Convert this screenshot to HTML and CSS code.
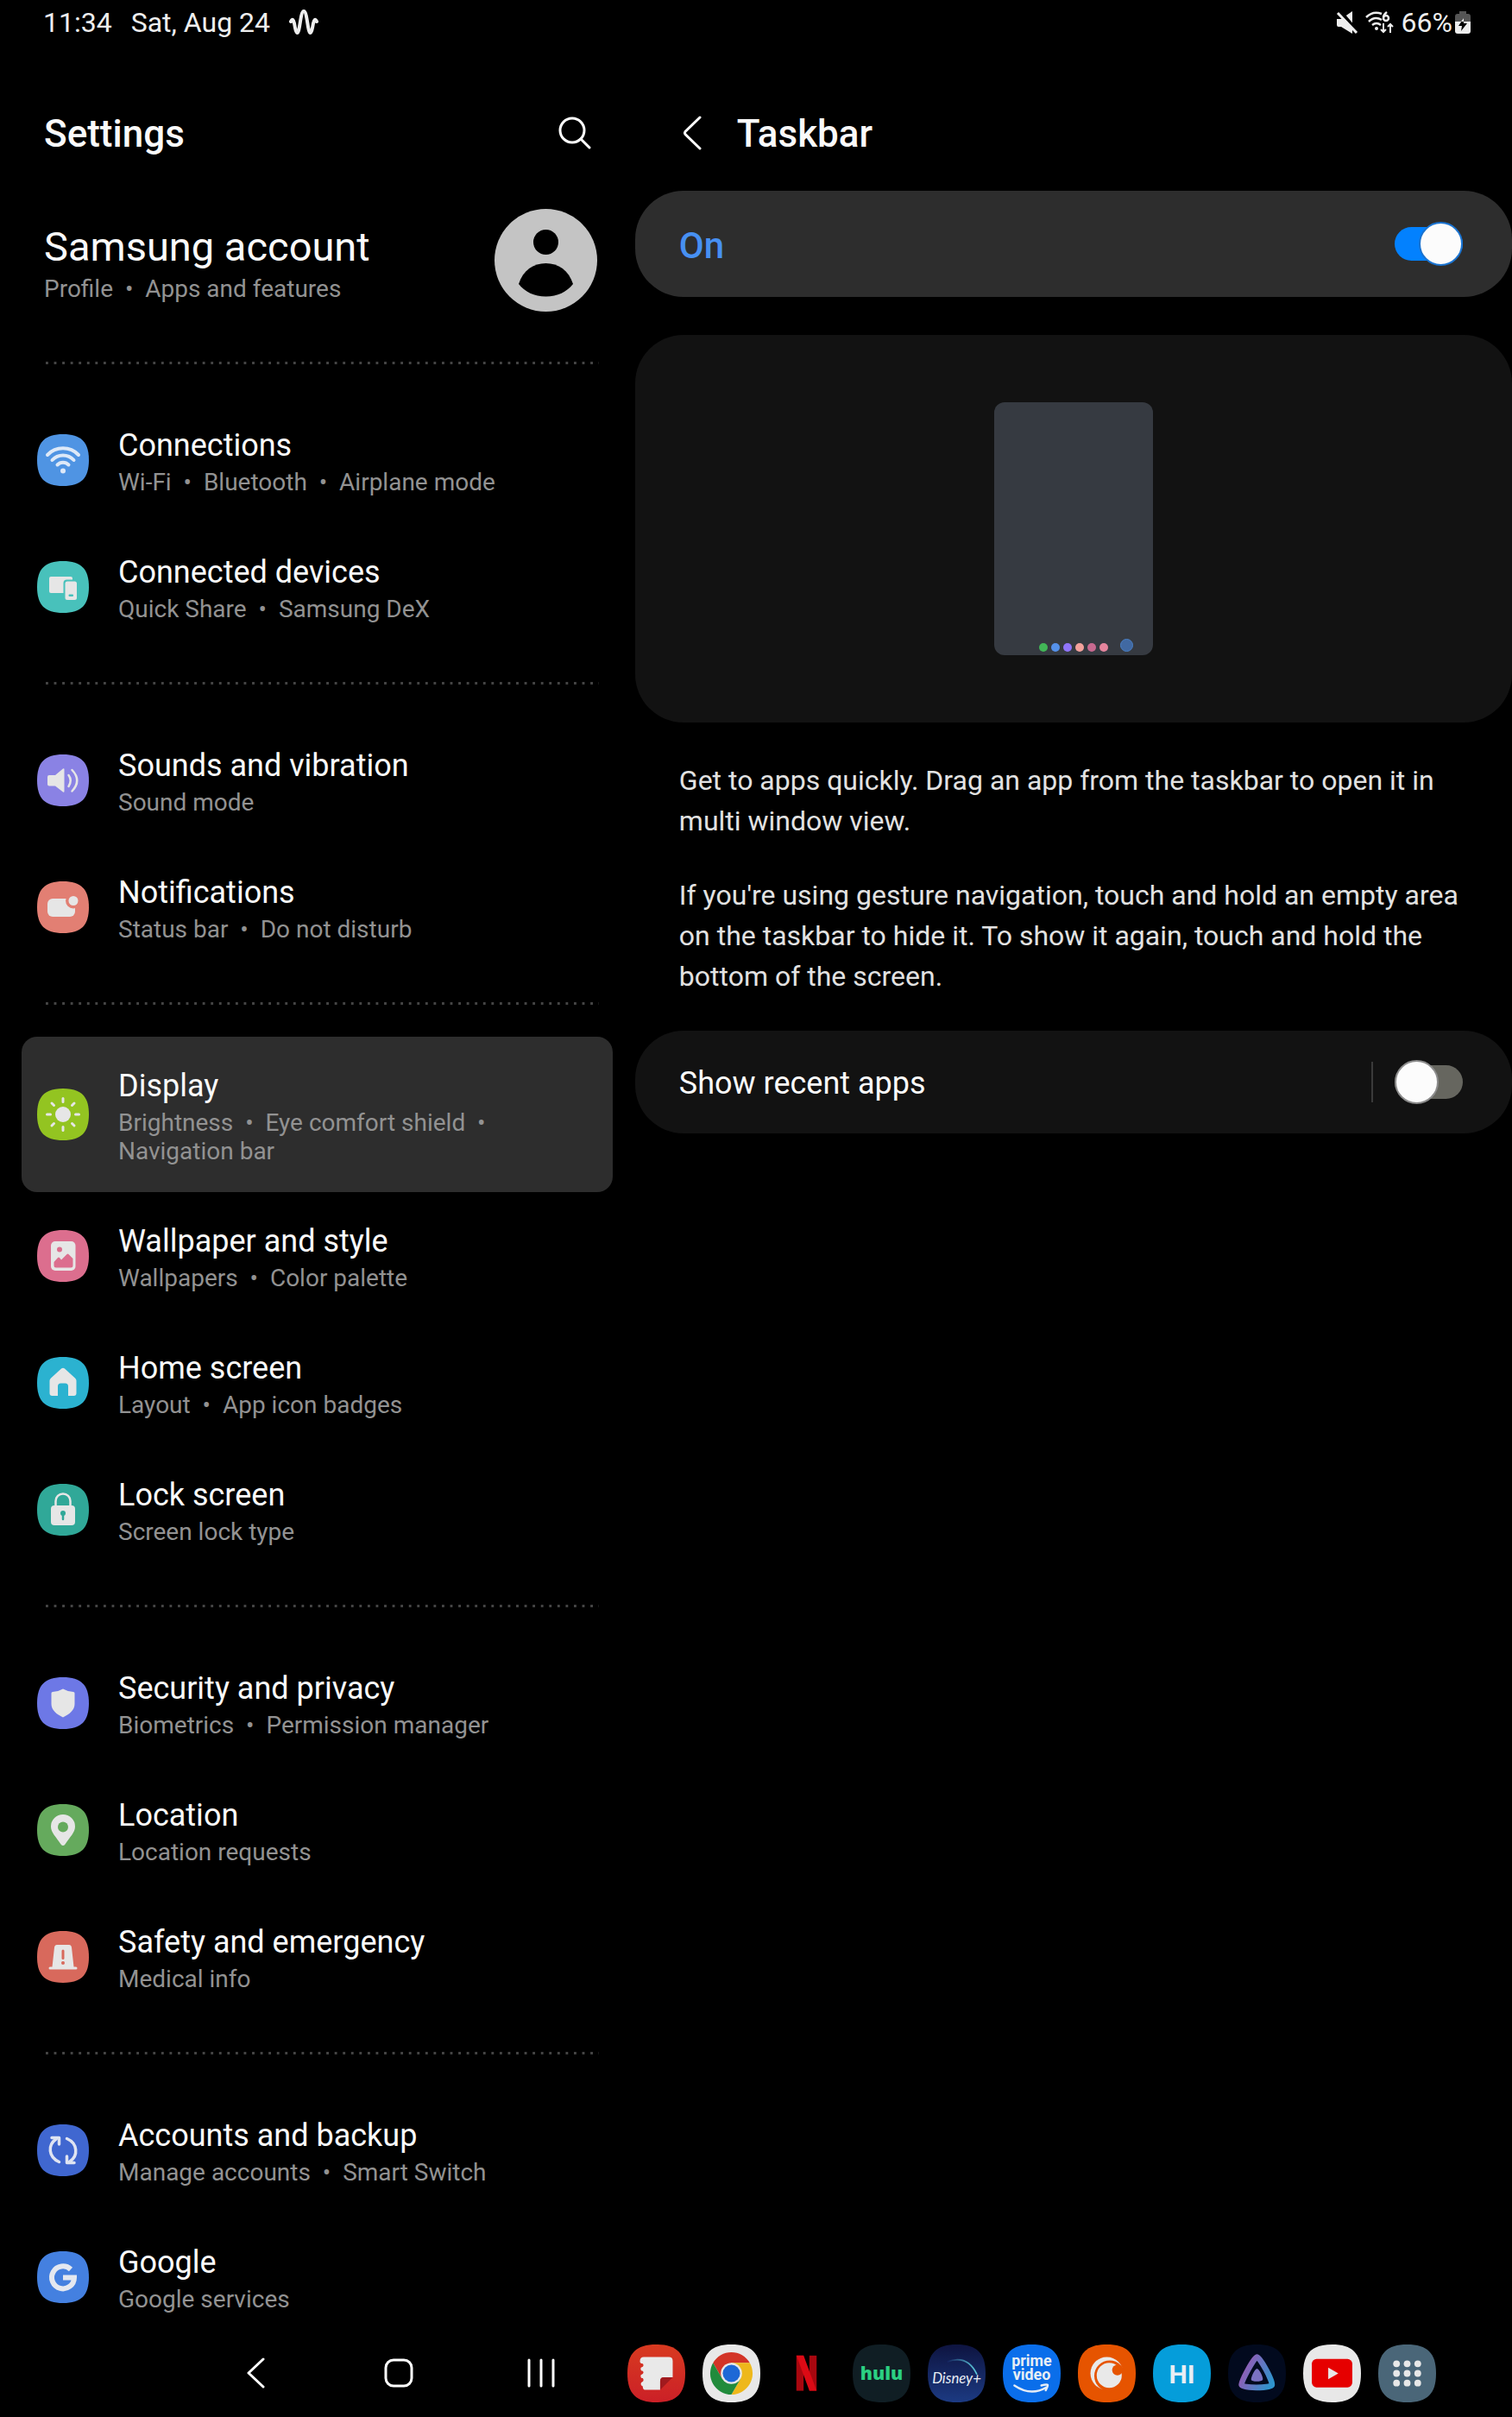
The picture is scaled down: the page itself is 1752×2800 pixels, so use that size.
FILE: index.html
```html
<!DOCTYPE html>
<html lang="en">
<head>
<meta charset="UTF-8">
<meta name="viewport" content="width=device-width, initial-scale=1.0">
<title>Settings</title>
<link rel="stylesheet" href="styles.css">
</head>
<body>

<!-- Shared icon background -->
<svg class="defs" aria-hidden="true">
  <symbol id="tile" viewBox="0 0 60 60">
    <path d="M30 0C51 0 60 9 60 30S51 60 30 60 0 51 0 30 9 0 30 0Z"/>
  </symbol>
</svg>

<header class="status-bar">
  <div class="status-group status-left">
    <span>11:34</span>
    <span>Sat, Aug 24</span>
    <svg width="34" height="30" viewBox="0 0 34 30" aria-hidden="true">
      <path d="M2 14C4 10 5 12 6 16 7 22 8 27 9.5 27 12.500 27 13 2 17 2S21.500 27 24.500 27C26 27 27 22 28 16 29 12 30 10 32 14" fill="none" stroke="#eee" stroke-width="4" stroke-linecap="round"/>
    </svg>
  </div>
  <div class="status-group status-right">
    <svg width="26" height="26" viewBox="0 0 26 26" aria-hidden="true">
      <path d="M1 9h5L19 0v26L6 18H3a2 2 0 0 1-2-2z" fill="#eee"/>
      <path d="M5 0L27 26" stroke="#000" stroke-width="4"/>
      <path d="M2 2L24 25" stroke="#eee" stroke-width="3"/>
    </svg>
    <svg width="34" height="26" viewBox="0 0 34 26" aria-hidden="true">
      <g fill="none" stroke="#eee" stroke-width="2.5">
        <path d="M1 7Q9-1 19 3"/>
        <path d="M4 12Q11 5 19 10"/>
        <path d="M8 16Q13 12 18 16"/>
        <path d="M25 1Q21 4 21 7"/>
        <circle cx="24" cy="8" r="3"/>
        <path d="M21 14v10M18 21l3 3 3-3M29 25V15M26 18l3-3 3 3" stroke-width="2"/>
      </g>
      <circle cx="13" cy="20" r="2" fill="#eee"/>
    </svg>
    <span>66%</span>
    <svg class="battery" width="18" height="26" viewBox="0 0 18 26" aria-hidden="true">
      <path d="M5 0h8v3h2a3 3 0 0 1 3 3v7H0V6a3 3 0 0 1 3-3h2z" fill="#555"/>
      <path d="M0 12h18v11a3 3 0 0 1-3 3H3a3 3 0 0 1-3-3z" fill="#eee"/>
      <path d="M10 8L4 17h4l-1 6 7-9h-4z" fill="#000"/>
      <path d="M10 8L7 12h3z" fill="#eee"/>
    </svg>
  </div>
</header>

<main class="panes">

  <nav class="sidebar">
    <div class="pane-header">
      <h1>Settings</h1>
      <button class="icon-button" aria-label="Search">
        <svg width="38" height="40" viewBox="0 0 38 40" aria-hidden="true">
          <g fill="none" stroke="#fff" stroke-width="3" stroke-linecap="round">
            <circle cx="16" cy="16" r="14"/>
            <path d="M26 26l10 10"/>
          </g>
        </svg>
      </button>
    </div>

    <a class="account" href="#account">
      <span class="account-text">
        <span class="account-name">Samsung account</span>
        <span class="sub">Profile &nbsp;•&nbsp; Apps and features</span>
      </span>
      <svg width="119" height="119" viewBox="0 0 119 119" aria-hidden="true">
        <circle cx="59.5" cy="59.5" r="59.5" fill="#c4c4c4"/>
        <circle cx="59.5" cy="38.5" r="14.5" fill="#000"/>
        <path d="M28 87C33 71 45 63 59.5 63S86 71 91 87C84 96 73 101.5 59.5 101.5S35 96 28 87Z" fill="#000"/>
      </svg>
    </a>

    <hr class="dots">

    <ul class="menu">
      <li><a class="item" href="#connections">
        <svg class="item-icon" viewBox="0 0 60 60" aria-hidden="true">
          <use href="#tile" fill="#4f94e3"/>
          <g fill="none" stroke="#dde9f8" stroke-width="4" stroke-linecap="round">
            <path d="M12 24A25 25 0 0 1 48 24"/>
            <path d="M17.5 30A17 17 0 0 1 42.5 30"/>
            <path d="M23.5 35.5A9 9 0 0 1 36.5 35.5"/>
          </g>
          <circle cx="30" cy="42.5" r="3" fill="#dde9f8"/>
        </svg>
        <span class="item-text">
          <span class="title">Connections</span>
          <span class="sub">Wi-Fi &nbsp;•&nbsp; Bluetooth &nbsp;•&nbsp; Airplane mode</span>
        </span>
      </a></li>
      <li><a class="item" href="#devices">
        <svg class="item-icon" viewBox="0 0 60 60" aria-hidden="true">
          <use href="#tile" fill="#48c1bb"/>
          <rect x="14" y="18" width="27" height="19" rx="2" fill="#e6e6e6"/>
          <rect x="30.5" y="21.5" width="17" height="26" rx="4" fill="#48c1bb"/>
          <rect x="32.5" y="23.5" width="13.5" height="21.5" rx="2.5" fill="#e6e6e6"/>
          <rect x="36.5" y="38.5" width="5.5" height="2.5" rx="1" fill="#48c1bb"/>
        </svg>
        <span class="item-text">
          <span class="title">Connected devices</span>
          <span class="sub">Quick Share &nbsp;•&nbsp; Samsung DeX</span>
        </span>
      </a></li>
    </ul>

    <hr class="dots">

    <ul class="menu">
      <li><a class="item" href="#sounds">
        <svg class="item-icon" viewBox="0 0 60 60" aria-hidden="true">
          <use href="#tile" fill="#8a82e4"/>
          <path d="M14 24h7l9-7.5q1.5-1 1.5 1v25q0 2-1.5 1L21 36.5h-7q-2 0-2-2v-8.5q0-2 2-2z" fill="#e6e6e6"/>
          <g fill="none" stroke="#e6e6e6" stroke-width="2.5" stroke-linecap="round">
            <path d="M36.5 24Q41 30 36.5 37"/>
            <path d="M40.5 18Q52 30 40.5 42.5"/>
          </g>
        </svg>
        <span class="item-text">
          <span class="title">Sounds and vibration</span>
          <span class="sub">Sound mode</span>
        </span>
      </a></li>
      <li><a class="item" href="#notifications">
        <svg class="item-icon" viewBox="0 0 60 60" aria-hidden="true">
          <use href="#tile" fill="#e27f73"/>
          <rect x="12" y="20" width="32" height="21" rx="6" fill="#e6e6e6"/>
          <circle cx="42" cy="22.5" r="9" fill="#e27f73"/>
          <circle cx="42" cy="22.5" r="5.5" fill="#e6e6e6"/>
        </svg>
        <span class="item-text">
          <span class="title">Notifications</span>
          <span class="sub">Status bar &nbsp;•&nbsp; Do not disturb</span>
        </span>
      </a></li>
    </ul>

    <hr class="dots">

    <ul class="menu">
      <li><a class="item selected" href="#display">
        <svg class="item-icon" viewBox="0 0 60 60" aria-hidden="true">
          <use href="#tile" fill="#93c421"/>
          <circle cx="30" cy="30" r="9" fill="#e6e6e6"/>
          <path d="M30 11.5v4M30 44.5v4M11.5 30h4M44.5 30h4M17 17l2.5 2.5M40.5 40.5l2.5 2.5M17 43l2.5-2.5M40.5 19.5l2.5-2.5" stroke="#e6e6e6" stroke-width="3" stroke-linecap="round"/>
        </svg>
        <span class="item-text">
          <span class="title">Display</span>
          <span class="sub">Brightness &nbsp;•&nbsp; Eye comfort shield &nbsp;•&nbsp; Navigation bar</span>
        </span>
      </a></li>
      <li><a class="item" href="#wallpaper">
        <svg class="item-icon" viewBox="0 0 60 60" aria-hidden="true">
          <use href="#tile" fill="#dc6e8e"/>
          <rect x="16" y="13" width="28.5" height="34" rx="5" fill="#e6e6e6"/>
          <circle cx="26" cy="22.5" r="3" fill="#dc6e8e"/>
          <path d="M19.5 37L24 32q1-1 2 0l2 2.5 6.5-6.5q1-1 2 0L41.500 33v8q0 2.5-2.5 2.5H22q-2.5 0-2.5-2.5z" fill="#dc6e8e"/>
        </svg>
        <span class="item-text">
          <span class="title">Wallpaper and style</span>
          <span class="sub">Wallpapers &nbsp;•&nbsp; Color palette</span>
        </span>
      </a></li>
      <li><a class="item" href="#home">
        <svg class="item-icon" viewBox="0 0 60 60" aria-hidden="true">
          <use href="#tile" fill="#2bb2d0"/>
          <path d="M28 13.5q2-1.5 4 0L44 24.5q1.5 1.5 1.5 3V42q0 3-3 3H36V34q0-3.5-3.5-3.5h-5Q24 30.500 24 34v11h-6.500q-3 0-3-3V27.500q0-1.500 1.500-3z" fill="#e6e6e6"/>
        </svg>
        <span class="item-text">
          <span class="title">Home screen</span>
          <span class="sub">Layout &nbsp;•&nbsp; App icon badges</span>
        </span>
      </a></li>
      <li><a class="item" href="#lock">
        <svg class="item-icon" viewBox="0 0 60 60" aria-hidden="true">
          <use href="#tile" fill="#30a898"/>
          <path d="M21.500 27v-7a8.500 8.500 0 0 1 17 0v7" fill="none" stroke="#e6e6e6" stroke-width="2.5"/>
          <rect x="16" y="25" width="28" height="23" rx="4" fill="#e6e6e6"/>
          <circle cx="30" cy="34" r="3" fill="#30a898"/>
          <path d="M30 35v6" stroke="#30a898" stroke-width="2.5" stroke-linecap="round"/>
        </svg>
        <span class="item-text">
          <span class="title">Lock screen</span>
          <span class="sub">Screen lock type</span>
        </span>
      </a></li>
    </ul>

    <hr class="dots">

    <ul class="menu">
      <li><a class="item" href="#security">
        <svg class="item-icon" viewBox="0 0 60 60" aria-hidden="true">
          <use href="#tile" fill="#6d78e6"/>
          <path d="M30 13.5q5 3 12 3.5 1.5 0 1.5 1.5V31c0 7-6 12-13.5 15.5C22.5 43 16.5 38 16.5 31V18.5q0-1.5 1.5-1.5 7-.5 12-3.5z" fill="#e6e6e6"/>
        </svg>
        <span class="item-text">
          <span class="title">Security and privacy</span>
          <span class="sub">Biometrics &nbsp;•&nbsp; Permission manager</span>
        </span>
      </a></li>
      <li><a class="item" href="#location">
        <svg class="item-icon" viewBox="0 0 60 60" aria-hidden="true">
          <use href="#tile" fill="#65aa5d"/>
          <path d="M30 12a14 14 0 0 1 14 14c0 7-6 12-11.5 20.5q-2.5 3-5 0C22 38 16 33 16 26a14 14 0 0 1 14-14z" fill="#e6e6e6"/>
          <circle cx="30" cy="26.5" r="6" fill="#65aa5d"/>
        </svg>
        <span class="item-text">
          <span class="title">Location</span>
          <span class="sub">Location requests</span>
        </span>
      </a></li>
      <li><a class="item" href="#safety">
        <svg class="item-icon" viewBox="0 0 60 60" aria-hidden="true">
          <use href="#tile" fill="#d8695c"/>
          <path d="M23 16h14q2.5 0 3 3l2.5 22.5h2.5q1.5 0 1.5 1.5t-1.5 1.5H15q-1.5 0-1.5-1.5t1.5-1.5h2.5L20 19q.5-3 3-3z" fill="#e6e6e6"/>
          <path d="M30 23v8.5" stroke="#d8695c" stroke-width="3" stroke-linecap="round"/>
          <circle cx="30" cy="37" r="2" fill="#d8695c"/>
        </svg>
        <span class="item-text">
          <span class="title">Safety and emergency</span>
          <span class="sub">Medical info</span>
        </span>
      </a></li>
    </ul>

    <hr class="dots">

    <ul class="menu">
      <li><a class="item" href="#backup">
        <svg class="item-icon" viewBox="0 0 60 60" aria-hidden="true">
          <use href="#tile" fill="#4067d0"/>
          <g fill="none" stroke="#dfe4f2" stroke-width="3.5" stroke-linecap="round" stroke-linejoin="round">
            <path d="M25.5 43.5C13 38 12 24 22 17M17 15.5h8.5V23"/>
            <path d="M34.5 16.5C47 22 48 36 38 43M43 44.5h-8.5V37"/>
          </g>
        </svg>
        <span class="item-text">
          <span class="title">Accounts and backup</span>
          <span class="sub">Manage accounts &nbsp;•&nbsp; Smart Switch</span>
        </span>
      </a></li>
      <li><a class="item" href="#google">
        <svg class="item-icon" viewBox="0 0 60 60" aria-hidden="true">
          <use href="#tile" fill="#4480e0"/>
          <path d="M39 21A13 13 0 1 0 43 30.500H30" fill="none" stroke="#e4e8f0" stroke-width="6"/>
        </svg>
        <span class="item-text">
          <span class="title">Google</span>
          <span class="sub">Google services</span>
        </span>
      </a></li>
    </ul>
  </nav>

  <section class="detail">
    <div class="pane-header">
      <button class="icon-button" aria-label="Back">
        <svg width="22" height="42" viewBox="0 0 22 42" aria-hidden="true">
          <path d="M20 2L3 18.500q-1 1.500 0 3L20 38" fill="none" stroke="#fff" stroke-width="3" stroke-linecap="round"/>
        </svg>
      </button>
      <h2>Taskbar</h2>
    </div>

    <div class="card master">
      <label for="taskbarSwitch">On</label>
      <input class="switch" type="checkbox" role="switch" id="taskbarSwitch" checked>
    </div>

    <div class="card preview">
      <div class="device">
        <div class="device-apps">
          <i class="dot green"></i>
          <i class="dot blue"></i>
          <i class="dot purple"></i>
          <i class="dot peach"></i>
          <i class="dot plum"></i>
          <i class="dot pink"></i>
        </div>
        <i class="device-touch"></i>
      </div>
    </div>

    <div class="description">
      <p>Get to apps quickly. Drag an app from the taskbar to open it in multi window view.</p>
      <p>If you're using gesture navigation, touch and hold an empty area on the taskbar to hide it. To show it again, touch and hold the bottom of the screen.</p>
    </div>

    <div class="card option">
      <label for="recentSwitch">Show recent apps</label>
      <span class="divider"></span>
      <input class="switch" type="checkbox" role="switch" id="recentSwitch">
    </div>
  </section>

</main>

<footer class="taskbar">
  <div class="nav-buttons">
    <button aria-label="Back">
      <svg width="34" height="36" viewBox="0 0 34 36" aria-hidden="true">
        <path d="M25 2L8 18l17 16" fill="none" stroke="#fff" stroke-width="3" stroke-linecap="round" stroke-linejoin="round"/>
      </svg>
    </button>
    <button aria-label="Home">
      <svg width="34" height="36" viewBox="0 0 34 36" aria-hidden="true">
        <rect x="2" y="3" width="30" height="30" rx="9" fill="none" stroke="#fff" stroke-width="3"/>
      </svg>
    </button>
    <button aria-label="Recent apps">
      <svg width="34" height="36" viewBox="0 0 34 36" aria-hidden="true">
        <path d="M3 3v30M17 3v30M31 3v30" stroke="#fff" stroke-width="3" stroke-linecap="round"/>
      </svg>
    </button>
  </div>

  <div class="apps">
    <a href="#notes" aria-label="Notes">
      <svg viewBox="0 0 60 60" aria-hidden="true">
        <defs>
          <linearGradient id="notesRed" x1="0" y1="0" x2="0" y2="1">
            <stop offset="0" stop-color="#d83a20"/>
            <stop offset="1" stop-color="#cb2027"/>
          </linearGradient>
        </defs>
        <use href="#tile" fill="url(#notesRed)"/>
        <path d="M17 13h26q4 0 4 4v17H38q-4 0-4 4v9H19q-3 0-3-3 0-1.500-1.500-1.500-1-1.500 0-3Q18 38 16 35q-3 0-2-3.500 4-1.500 2-4-3 0-2-3.500 4-1 2-4-3 0-3-2.500 0-4.500 4-4.500z" fill="#e9e9e9"/>
        <path d="M34 47v-9q0-4 4-4h9z" fill="#a01a1e"/>
      </svg>
    </a>
    <a href="#chrome" aria-label="Chrome">
      <svg viewBox="0 0 60 60" aria-hidden="true">
        <use href="#tile" fill="#e8e8e8"/>
        <path d="M10.95 19A22 22 0 0 1 49.05 19H30L20.5 35.5Z" fill="#d33427"/>
        <path d="M49.05 19A22 22 0 0 1 30 52L39.5 35.5 30 19Z" fill="#eeb81b"/>
        <path d="M30 52A22 22 0 0 1 10.95 19L20.5 35.5H39.5Z" fill="#218b3c"/>
        <circle cx="30" cy="30" r="11" fill="#e8e8e8"/>
        <circle cx="30" cy="30" r="9" fill="#1d68d6"/>
      </svg>
    </a>
    <a href="#netflix" aria-label="Netflix">
      <svg viewBox="0 0 60 60" aria-hidden="true">
        <rect x="19.5" y="11.5" width="7.5" height="36.5" fill="#a8070f"/>
        <rect x="33" y="11.5" width="7.5" height="36.5" fill="#a8070f"/>
        <path d="M19.5 11.5H27L40.5 48H33Z" fill="#dc0a15"/>
      </svg>
    </a>
    <a href="#hulu" aria-label="Hulu">
      <svg viewBox="0 0 60 60" aria-hidden="true">
        <use href="#tile" fill="#101e24"/>
        <text class="logo hulu" x="30" y="37">hulu</text>
      </svg>
    </a>
    <a href="#disney" aria-label="Disney+">
      <svg viewBox="0 0 60 60" aria-hidden="true">
        <defs>
          <linearGradient id="disneyBlue" x1="0" y1="0" x2="0" y2="1">
            <stop offset="0" stop-color="#0e1440"/>
            <stop offset="1" stop-color="#1c3a82"/>
          </linearGradient>
          <linearGradient id="disneyArc">
            <stop offset="0" stop-color="#12205c"/>
            <stop offset="1" stop-color="#5fd0e0"/>
          </linearGradient>
        </defs>
        <use href="#tile" fill="url(#disneyBlue)"/>
        <path d="M20 18Q41 10 51 31" fill="none" stroke="url(#disneyArc)" stroke-width="1.5"/>
        <text class="logo disney" x="30" y="40">Disney+</text>
      </svg>
    </a>
    <a href="#prime" aria-label="Prime Video">
      <svg viewBox="0 0 60 60" aria-hidden="true">
        <use href="#tile" fill="#0a6eea"/>
        <text class="logo prime"><tspan x="30" y="22">prime</tspan><tspan x="30" y="37">video</tspan></text>
        <path d="M12 42.5Q29 54 45 44.500M40 42.5q6-1.5 6.5-.5t-2 5.5" fill="none" stroke="#e4ecf6" stroke-width="2.2" stroke-linecap="round"/>
      </svg>
    </a>
    <a href="#crunchyroll" aria-label="Crunchyroll">
      <svg viewBox="0 0 60 60" aria-hidden="true">
        <use href="#tile" fill="#e65400"/>
        <circle cx="30" cy="30" r="17" fill="#e9e9e9"/>
        <circle cx="33" cy="32.5" r="16" fill="#e65400"/>
        <circle cx="32.5" cy="32" r="13" fill="#e9e9e9"/>
        <circle cx="41" cy="26.5" r="5.5" fill="#e65400"/>
      </svg>
    </a>
    <a href="#hi" aria-label="HI">
      <svg viewBox="0 0 60 60" aria-hidden="true">
        <use href="#tile" fill="#059dda"/>
        <text class="logo hi" x="30" y="40">HI</text>
      </svg>
    </a>
    <a href="#jellyfin" aria-label="Jellyfin">
      <svg viewBox="0 0 60 60" aria-hidden="true">
        <defs>
          <linearGradient id="jelly" x1="0" y1="0.3" x2="1" y2="0.8">
            <stop offset="0" stop-color="#9a58b4"/>
            <stop offset="1" stop-color="#2f93cc"/>
          </linearGradient>
        </defs>
        <use href="#tile" fill="#020a1e"/>
        <path d="M30 13C33 13 47 38.5 45.5 42S14.5 45.5 14 42 27 13 30 13Z" fill="none" stroke="url(#jelly)" stroke-width="6" stroke-linejoin="round"/>
        <path d="M30 25C32 25 37 34 36 36.5S24.500 39 24 36.5 28 25 30 25Z" fill="#7a72c2"/>
      </svg>
    </a>
    <a href="#youtube" aria-label="YouTube">
      <svg viewBox="0 0 60 60" aria-hidden="true">
        <use href="#tile" fill="#e8e8e8"/>
        <rect x="9" y="15" width="42" height="29.5" rx="5" fill="#e60000"/>
        <path d="M26 24l10.5 6L26 36z" fill="#e8e8e8"/>
      </svg>
    </a>
    <a href="#all" aria-label="All apps">
      <svg viewBox="0 0 60 60" aria-hidden="true">
        <use href="#tile" fill="#4a6678"/>
        <g fill="#e8e8e8">
          <circle cx="19" cy="20" r="3.5"/><circle cx="30" cy="20" r="3.5"/><circle cx="41" cy="20" r="3.5"/>
          <circle cx="19" cy="30" r="3.5"/><circle cx="30" cy="30" r="3.5"/><circle cx="41" cy="30" r="3.5"/>
          <circle cx="19" cy="40" r="3.5"/><circle cx="30" cy="40" r="3.5"/><circle cx="41" cy="40" r="3.5"/>
        </g>
      </svg>
    </a>
  </div>
</footer>

</body>
</html>
```
FILE: styles.css
```css
* {
    box-sizing: border-box;
}

body {
    margin: 0;
    min-height: 100vh;
    display: flex;
    flex-direction: column;
    background-color: #000000;
    color: #fafafa;
    font-family: "Roboto", sans-serif;
}

a {
    color: inherit;
    text-decoration: none;
}

button {
    padding: 0;
    border: 0;
    background: none;
    cursor: pointer;
}

svg {
    display: block;
    flex: none;
}

.defs {
    position: absolute;
    width: 0;
    height: 0;
}

/* Status bar */
.status-bar {
    display: flex;
    justify-content: space-between;
    height: 52px;
    padding: 0 48px 0 50px;
    font-size: 32px;
    line-height: 38px;
    color: #eeeeee;
}

.status-group {
    display: flex;
    align-items: center;
}

.status-left {
    gap: 22px;
}

.status-right {
    gap: 8px;
}

.battery {
    margin-left: -5px;
}

/* Two panes */
.panes {
    flex: 1;
    display: grid;
    grid-template-columns: 42fr 58fr;
}

.pane-header {
    display: flex;
    align-items: center;
    height: 129px;
    padding-top: 77px;
}

h1, h2 {
    margin: 0;
    font-size: 44px;
    font-weight: 500;
    line-height: 52px;
}

.sidebar .pane-header {
    justify-content: space-between;
    padding-left: 51px;
    padding-right: 51px;
}

.account {
    display: flex;
    justify-content: space-between;
    margin: 61px 44px 58px 51px;
}

.account-text {
    padding-top: 16px;
}

.account-name {
    display: block;
    margin-bottom: 5px;
    font-size: 47px;
    line-height: 55px;
}

.sub {
    display: block;
    font-size: 28px;
    line-height: 33px;
    color: #929292;
}

.dots {
    height: 3px;
    margin: 37px 42px 37px 53px;
    border: 0;
    background-image: linear-gradient(90deg, #444444 3px, transparent 3px);
    background-size: calc(100% / 67) 3px;
}

.menu {
    margin: 0;
    padding: 0;
    list-style: none;
}

.item {
    display: flex;
    align-items: center;
    gap: 34px;
    margin: 0 26px 0 25px;
    padding: 0 18px;
    border-radius: 18px;
}

.selected {
    background-color: #2d2d2d;
}

.item-icon {
    width: 60px;
    height: 60px;
}

.item-text {
    padding: 36px 0 31px;
}

.title {
    display: block;
    margin-bottom: 5px;
    font-size: 36px;
    line-height: 42px;
}

/* Taskbar settings */
.detail .pane-header {
    gap: 41px;
    padding-left: 55px;
    margin-bottom: 40px;
}

.card {
    display: flex;
    align-items: center;
    border-radius: 56px;
    background-color: #121212;
}

.master, .option {
    padding: 36px 57px 36px 51px;
}

.card label {
    flex: 1;
    padding-top: 4px;
}

.master {
    background-color: #2d2d2d;
    color: #4790f2;
    font-size: 42px;
    font-weight: 500;
    line-height: 47px;
}

.option {
    font-size: 36px;
    line-height: 43px;
}

.divider {
    width: 2px;
    height: 47px;
    margin-right: 25px;
    background-color: #3a3a3a;
}

.switch {
    appearance: none;
    display: flex;
    align-items: center;
    width: 79px;
    height: 39px;
    margin: 0;
    border-radius: 20px;
    background-color: #66665f;
    cursor: pointer;
}

.switch::before {
    content: "";
    flex: none;
    width: 47px;
    height: 47px;
    border: 2px solid #8c8c8c;
    border-radius: 50%;
    background-color: #fcfcfc;
}

.switch:checked {
    justify-content: flex-end;
    background-color: #0381fe;
}

.switch:checked::before {
    border-color: #1a73d0;
}

.preview {
    justify-content: center;
    margin-top: 44px;
    padding: 78px;
}

/* Small tablet drawing */
.device {
    display: flex;
    align-items: flex-end;
    justify-content: flex-end;
    gap: 14px;
    width: 184px;
    height: 293px;
    padding: 0 23px 4px 0;
    border-radius: 12px;
    background-color: #363a41;
}

.device-apps {
    display: flex;
    gap: 4px;
}

.dot {
    width: 10px;
    height: 10px;
    border-radius: 5px;
}

.green { background-color: #42b657; }
.blue { background-color: #5591ea; }
.purple { background-color: #9075fb; }
.peach { background-color: #f3a19c; }
.plum { background-color: #c7698f; }
.pink { background-color: #e5859d; }

.device-touch {
    width: 15px;
    height: 15px;
    border: 1px solid #4a7fc4;
    border-radius: 50%;
    background-color: #4169a2;
}

.description {
    margin: 44px 51px 39px;
    font-size: 32px;
    line-height: 47px;
    color: #e2e2e2;
}

.description p {
    margin: 0 0 39px;
}

/* Bottom bar */
.taskbar {
    display: flex;
    justify-content: flex-end;
    align-items: center;
    gap: 18px;
    height: 88px;
    padding: 0 88px 14px 0;
}

.nav-buttons {
    display: flex;
}

.nav-buttons button {
    display: flex;
    justify-content: center;
    width: 165px;
}

.apps {
    display: flex;
    gap: 20px;
}

.apps svg {
    width: 67px;
    height: 67px;
}

.logo {
    text-anchor: middle;
    fill: #e8eef4;
}

.hulu {
    font: 800 19px "Open Sans", sans-serif;
    fill: #2bd082;
}

.disney {
    font: italic 400 15px "Lato", sans-serif;
}

.prime {
    font: 700 16px "Roboto", sans-serif;
}

.hi {
    font: 700 27px "Roboto", sans-serif;
}
```
